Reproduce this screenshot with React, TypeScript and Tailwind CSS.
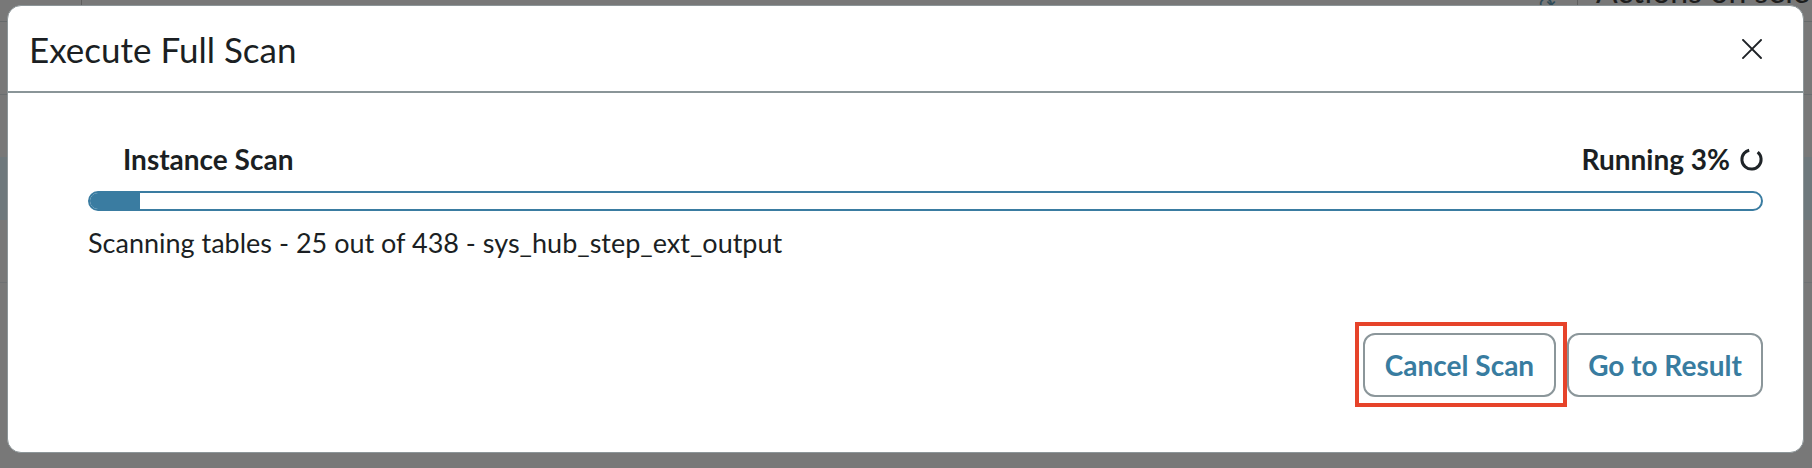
import React from 'react';

// Ring spinner with a small gap near the top-right, like the reference
const Spinner: React.FC = () => (
  <svg width="23" height="23" viewBox="0 0 23 23" className="shrink-0">
    <circle
      cx="11.5"
      cy="11.5"
      r="9.6"
      fill="none"
      stroke="#1f2428"
      strokeWidth="3"
      strokeDasharray="51 9.3"
      transform="rotate(-50 11.5 11.5)"
    />
  </svg>
);

const CloseIcon: React.FC = () => (
  <svg width="20" height="20" viewBox="0 0 20 20">
    <path d="M1 1 19 19M19 1 1 19" stroke="#1e2226" strokeWidth="1.9" strokeLinecap="square" />
  </svg>
);

// The dimmed page that sits behind the dialog
const BackdropPage: React.FC = () => (
  <div className="flex flex-col w-full h-full">
    <div className="h-[22px] flex border-b border-[#666a6b]">
      <div className="w-[82px] border-r border-[#5e5e5e]" />
      <div className="flex-1" />
      <div className="w-[60px] flex justify-center">
        <span className="-mt-[12px] text-[20px] text-[#2f4a57]">⟳</span>
      </div>
      <div className="w-[235px] border-l border-[#5e5e5e] pl-[18px] overflow-hidden">
        <span className="block -mt-[27px] text-[32px] leading-[36px] text-[#1e1e1e] whitespace-nowrap">
          Actions on selected
        </span>
      </div>
    </div>
    <div className="h-[73px] border-b border-[#6a6e70]" />
    <div className="h-[62px]" />
    <div className="h-[63px] bg-[#6e787c]" />
    <div className="h-[63px] border-b border-[#6e7173]" />
    <div className="flex-1" />
  </div>
);

export default function App() {
  return (
    <div className="relative w-[1812px] h-[468px] overflow-hidden bg-[#787878] font-['Lato',sans-serif]">
      <BackdropPage />

      {/* Dialog */}
      <div className="absolute left-[7px] top-[5px] w-[1797px] h-[448px] rounded-[14px] border border-[#8d9699] bg-white flex flex-col overflow-hidden">
        <header className="h-[87px] shrink-0 flex items-center justify-between pl-[21px] pr-[41px] border-b-2 border-[#8a9598]">
          <h1 className="text-[35px] leading-[42px] text-[#1b1f23]">Execute Full Scan</h1>
          <button className="w-[20px] h-[20px] flex items-center justify-center">
            <CloseIcon />
          </button>
        </header>

        <div className="flex-1 flex flex-col pl-[80px] pr-[40px] pt-[49px] pb-[55px]">
          {/* Label row */}
          <div className="flex items-center justify-between h-[34px]">
            <span className="pl-[35px] text-[28px] leading-[34px] font-bold text-[#1b1f23]">Instance Scan</span>
            <div className="flex items-center gap-[10px]">
              <span className="text-[28px] leading-[34px] font-bold text-[#1b1f23]">Running 3%</span>
              <Spinner />
            </div>
          </div>

          {/* Progress bar */}
          <div className="mt-[15px] h-[20px] rounded-full border-2 border-[#3a7ca1] overflow-hidden">
            <div className="h-full bg-[#3a7ca1]" style={{ width: '3%' }} />
          </div>

          <p className="mt-[15px] text-[27px] leading-[34px] text-[#1b1f23]">
            Scanning tables - 25 out of 438 - sys_hub_step_ext_output
          </p>

          {/* Footer buttons */}
          <div className="mt-auto flex justify-end gap-[11px]">
            <div className="relative">
              <button className="w-[193px] h-[64px] rounded-[12px] border-2 border-[#8b969a] bg-white text-[28px] font-bold text-[#387ca0]">
                Cancel Scan
              </button>
              <div className="absolute -top-[11px] -left-[8px] -right-[11px] -bottom-[10px] border-4 border-[#e6432a] pointer-events-none" />
            </div>
            <button className="w-[196px] h-[64px] rounded-[12px] border-2 border-[#8b969a] bg-white text-[28px] font-bold text-[#387ca0]">
              Go to Result
            </button>
          </div>
        </div>
      </div>
    </div>
  );
}
